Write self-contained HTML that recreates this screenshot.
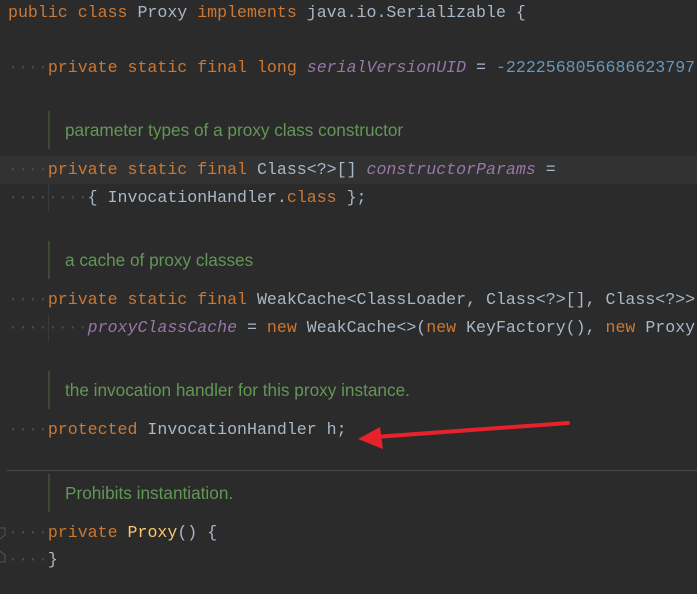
<!DOCTYPE html>
<html><head><style>
body{margin:0;width:697px;height:594px;background:#2b2b2b;overflow:hidden;position:relative;font-family:"Liberation Mono",monospace;font-size:16.6px;color:#a9b7c6}
#w{position:absolute;left:0;top:0;width:697px;height:594px;overflow:hidden}
.l{position:absolute;left:8px;height:22px;line-height:22px;white-space:pre}
.k{color:#cc7832}.f{color:#9876aa;font-style:italic}.n{color:#6897bb}.d{color:#4a4a4a}
.c{position:absolute;left:48px;border-left:2px solid #3b4a35;height:38px;padding-left:15px;line-height:38px;font-family:"Liberation Sans",sans-serif;font-size:17.2px;color:#629755;white-space:nowrap}
.hl{position:absolute;left:0;top:156px;width:697px;height:28px;background:#323232}
.g{position:absolute;left:48px;width:1px;background:#3a3a3a}
</style></head><body><div id="w">
<div class="hl"></div>
<div class="g" style="top:184px;height:28px"></div>
<div class="g" style="top:314px;height:28px"></div>
<div class="l" style="top:2px"><span class="k">public class</span> Proxy <span class="k">implements</span> java.io.Serializable {</div>
<div class="l" style="top:57px"><span class="d">····</span><span class="k">private static final long</span> <span class="f">serialVersionUID</span> = <span class="n">-2222568056686623797L</span>;</div>
<div class="c" style="top:111px">parameter types of a proxy class constructor</div>
<div class="l" style="top:159px"><span class="d">····</span><span class="k">private static final</span> Class&lt;?&gt;[] <span class="f">constructorParams</span> =</div>
<div class="l" style="top:187px"><span class="d">········</span>{ InvocationHandler.<span class="k">class</span> };</div>
<div class="c" style="top:241px">a cache of proxy classes</div>
<div class="l" style="top:289px"><span class="d">····</span><span class="k">private static final</span> WeakCache&lt;ClassLoader, Class&lt;?&gt;[], Class&lt;?&gt;&gt;</div>
<div class="l" style="top:317px"><span class="d">········</span><span class="f">proxyClassCache</span> = <span class="k">new</span> WeakCache&lt;&gt;(<span class="k">new</span> KeyFactory(), <span class="k">new</span> Proxy</div>
<div class="c" style="top:371px">the invocation handler for this proxy instance.</div>
<div class="l" style="top:419px"><span class="d">····</span><span class="k">protected</span> InvocationHandler h;</div>
<div style="position:absolute;left:7px;top:470px;width:690px;height:1px;background:#4a4a4a"></div>
<div class="c" style="top:474px">Prohibits instantiation.</div>
<div class="l" style="top:522px"><span class="d">····</span><span class="k">private</span> <span style="color:#ffc66d">Proxy</span>() {</div>
<div class="l" style="top:549px"><span class="d">····</span>}</div>
<svg style="position:absolute;left:0;top:0" width="697" height="594">
<line x1="568" y1="423" x2="375" y2="437" stroke="#e8222a" stroke-width="4" stroke-linecap="round"/>
<polygon points="358,439 380,427 383,449" fill="#e8222a"/>
<path d="M0 528 L5 528 L5 535 L0 539 M0 562 L5 562 L5 555 L0 551" stroke="#555" fill="none"/>
</svg>
</div></body></html>
